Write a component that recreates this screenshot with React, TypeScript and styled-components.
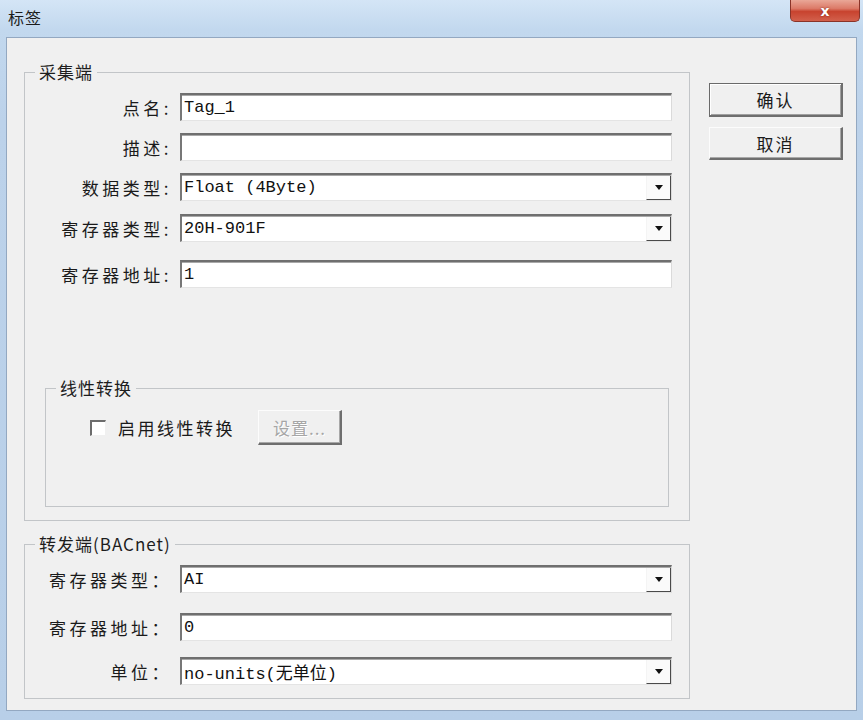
import React from "react";
import styled, { createGlobalStyle } from "styled-components";

const GlobalStyle = createGlobalStyle`
  html, body { margin: 0; padding: 0; background: #c3d7ec; }
  body { font-family: "Noto Sans CJK SC", "Noto Sans", sans-serif; }
  * { box-sizing: border-box; }
`;

const Window = styled.div`
  width: 863px;
  height: 720px;
  display: flex;
  flex-direction: column;
  overflow: hidden;
  background: linear-gradient(180deg, #d4e5f6 0px, #c2d8ee 30px, #bcd2ea 120px, #b8cfe8 100%);
`;

const TitleBar = styled.div`
  height: 37px;
  flex-shrink: 0;
  display: flex;
  align-items: flex-start;
  padding-left: 8px;
`;

const Title = styled.div`
  margin-top: 7px;
  font-size: 16px;
  line-height: 20px;
  color: #1c1c1c;
  letter-spacing: 1px;
`;

const CloseButton = styled.div`
  margin-left: auto;
  margin-right: 3px;
  width: 70px;
  height: 22px;
  display: flex;
  align-items: center;
  justify-content: center;
  border: 1px solid #8a3328;
  border-top: none;
  border-radius: 0 0 5px 5px;
  background: linear-gradient(180deg, #e9a797 0%, #dc7a68 40%, #c8432f 55%, #d2604c 100%);
  color: #fff;
  font-family: "DejaVu Sans", sans-serif;
  font-weight: bold;
  font-size: 14px;
  text-shadow: 0 0 2px #7a2116;
`;

const Client = styled.div`
  flex: 1;
  margin: 0 6px 9px 6px;
  border: 1px solid #93a8c1;
  background: #f0f0f0;
  display: flex;
  gap: 19px;
  padding: 23px 0 0 17px;
`;

const MainColumn = styled.div`
  width: 666px;
  display: flex;
  flex-direction: column;
`;

const Group = styled.fieldset<{ $inner?: boolean }>`
  margin: ${(p) => (p.$inner ? "89px 20px 0 20px" : "0")};
  padding: ${(p) => (p.$inner ? "11px 0 61px 0" : "10px 0 13px 0")};
  border: 1px solid #c2c5c8;
  min-width: 0;
  & + & {
    margin-top: 12px;
  }
`;

const Legend = styled.legend`
  margin-left: 10px;
  padding: 0 4px;
  font-size: 17px;
  line-height: 22px;
  letter-spacing: 1px;
  color: #1d1d1d;
`;

const Row = styled.div<{ $mt?: number }>`
  display: grid;
  grid-template-columns: 147px 1fr;
  column-gap: 8px;
  align-items: center;
  margin: ${(p) => p.$mt ?? 0}px 17px 0 0;
  height: 28px;
`;

const Label = styled.div`
  text-align: right;
  font-size: 17px;
  letter-spacing: 3.5px;
  color: #1a1a1a;
  white-space: nowrap;
`;

const Field = styled.div`
  height: 28px;
  display: flex;
  align-items: stretch;
  background: #fff;
  border-top: 2px solid #6f6f6f;
  border-left: 2px solid #777;
  border-right: 1px solid #dadada;
  border-bottom: 1px solid #e4e4e4;
  box-shadow: inset 0 1px 0 #a9a9a9;
`;

const Value = styled.div`
  flex: 1;
  display: flex;
  align-items: center;
  padding-left: 2px;
  font-family: "Liberation Mono", "Noto Sans CJK SC", monospace;
  font-size: 17px;
  color: #111;
  white-space: nowrap;
  overflow: hidden;
`;

const DropButton = styled.div`
  width: 25px;
  margin: 1px 0 0 0;
  display: flex;
  align-items: center;
  justify-content: center;
  background: #fafafa;
  border-right: 1px solid #4a4a4a;
  border-bottom: 1px solid #4a4a4a;
  border-left: 1px solid #f4f4f4;
`;

const Arrow = styled.span`
  width: 0;
  height: 0;
  border-left: 4px solid transparent;
  border-right: 4px solid transparent;
  border-top: 5px solid #111;
`;

const CheckRow = styled.div`
  display: flex;
  align-items: center;
  height: 35px;
  padding-left: 44px;
`;

const CheckBox = styled.span`
  width: 16px;
  height: 16px;
  background: #fff;
  border-top: 2px solid #6c6c6c;
  border-left: 2px solid #6c6c6c;
  border-right: 1px solid #f0f0f0;
  border-bottom: 1px solid #f0f0f0;
`;

const CheckText = styled.span`
  margin: 0 23px 0 12px;
  font-size: 17px;
  letter-spacing: 2.5px;
  color: #1a1a1a;
`;

const Button = styled.div<{ $default?: boolean; $disabled?: boolean; $w: number; $h: number }>`
  width: ${(p) => p.$w}px;
  height: ${(p) => p.$h}px;
  display: flex;
  align-items: center;
  justify-content: center;
  background: #f0f0f0;
  font-size: 17px;
  letter-spacing: ${(p) => (p.$disabled ? "1px" : "2px")};
  color: ${(p) => (p.$disabled ? "#a6a6a6" : "#1a1a1a")};
  text-shadow: ${(p) => (p.$disabled ? "1px 1px 0 #fff" : "none")};
  border-top: 1px solid ${(p) => (p.$default ? "#6a6a6a" : "#fcfcfc")};
  border-left: 1px solid ${(p) => (p.$default ? "#6a6a6a" : "#fcfcfc")};
  border-right: 2px solid #6e6e6e;
  border-bottom: 2px solid #6e6e6e;
  box-shadow: ${(p) => (p.$default ? "inset 1px 1px 0 #fff, inset -1px -1px 0 #a0a0a0" : "inset -1px -1px 0 #a8a8a8")};
`;

const SideColumn = styled.div`
  margin-top: 22px;
  display: flex;
  flex-direction: column;
  gap: 10px;
`;

type FieldProps = { value: string; combo?: boolean };

const InputField = ({ value, combo }: FieldProps) => (
  <Field>
    <Value>{value}</Value>
    {combo && (
      <DropButton>
        <Arrow />
      </DropButton>
    )}
  </Field>
);

export default function App() {
  return (
    <>
      <GlobalStyle />
      <Window>
        <TitleBar>
          <Title>标签</Title>
          <CloseButton>x</CloseButton>
        </TitleBar>
        <Client>
          <MainColumn>
            <Group>
              <Legend>采集端</Legend>
              <Row>
                <Label>点名:</Label>
                <InputField value="Tag_1" />
              </Row>
              <Row $mt={12}>
                <Label>描述:</Label>
                <InputField value="" />
              </Row>
              <Row $mt={12}>
                <Label>数据类型:</Label>
                <InputField value="Float (4Byte)" combo />
              </Row>
              <Row $mt={13}>
                <Label>寄存器类型:</Label>
                <InputField value="20H-901F" combo />
              </Row>
              <Row $mt={18}>
                <Label>寄存器地址:</Label>
                <InputField value="1" />
              </Row>
              <Group $inner>
                <Legend>线性转换</Legend>
                <CheckRow>
                  <CheckBox />
                  <CheckText>启用线性转换</CheckText>
                  <Button $disabled $w={84} $h={35}>
                    设置...
                  </Button>
                </CheckRow>
              </Group>
            </Group>
            <Group>
              <Legend>转发端(BACnet)</Legend>
              <Row>
                <Label>寄存器类型：</Label>
                <InputField value="AI" combo />
              </Row>
              <Row $mt={20}>
                <Label>寄存器地址：</Label>
                <InputField value="0" />
              </Row>
              <Row $mt={16}>
                <Label>单位：</Label>
                <InputField value="no-units(无单位)" combo />
              </Row>
            </Group>
          </MainColumn>
          <SideColumn>
            <Button $default $w={134} $h={34}>确认</Button>
            <Button $w={134} $h={33}>取消</Button>
          </SideColumn>
        </Client>
      </Window>
    </>
  );
}
